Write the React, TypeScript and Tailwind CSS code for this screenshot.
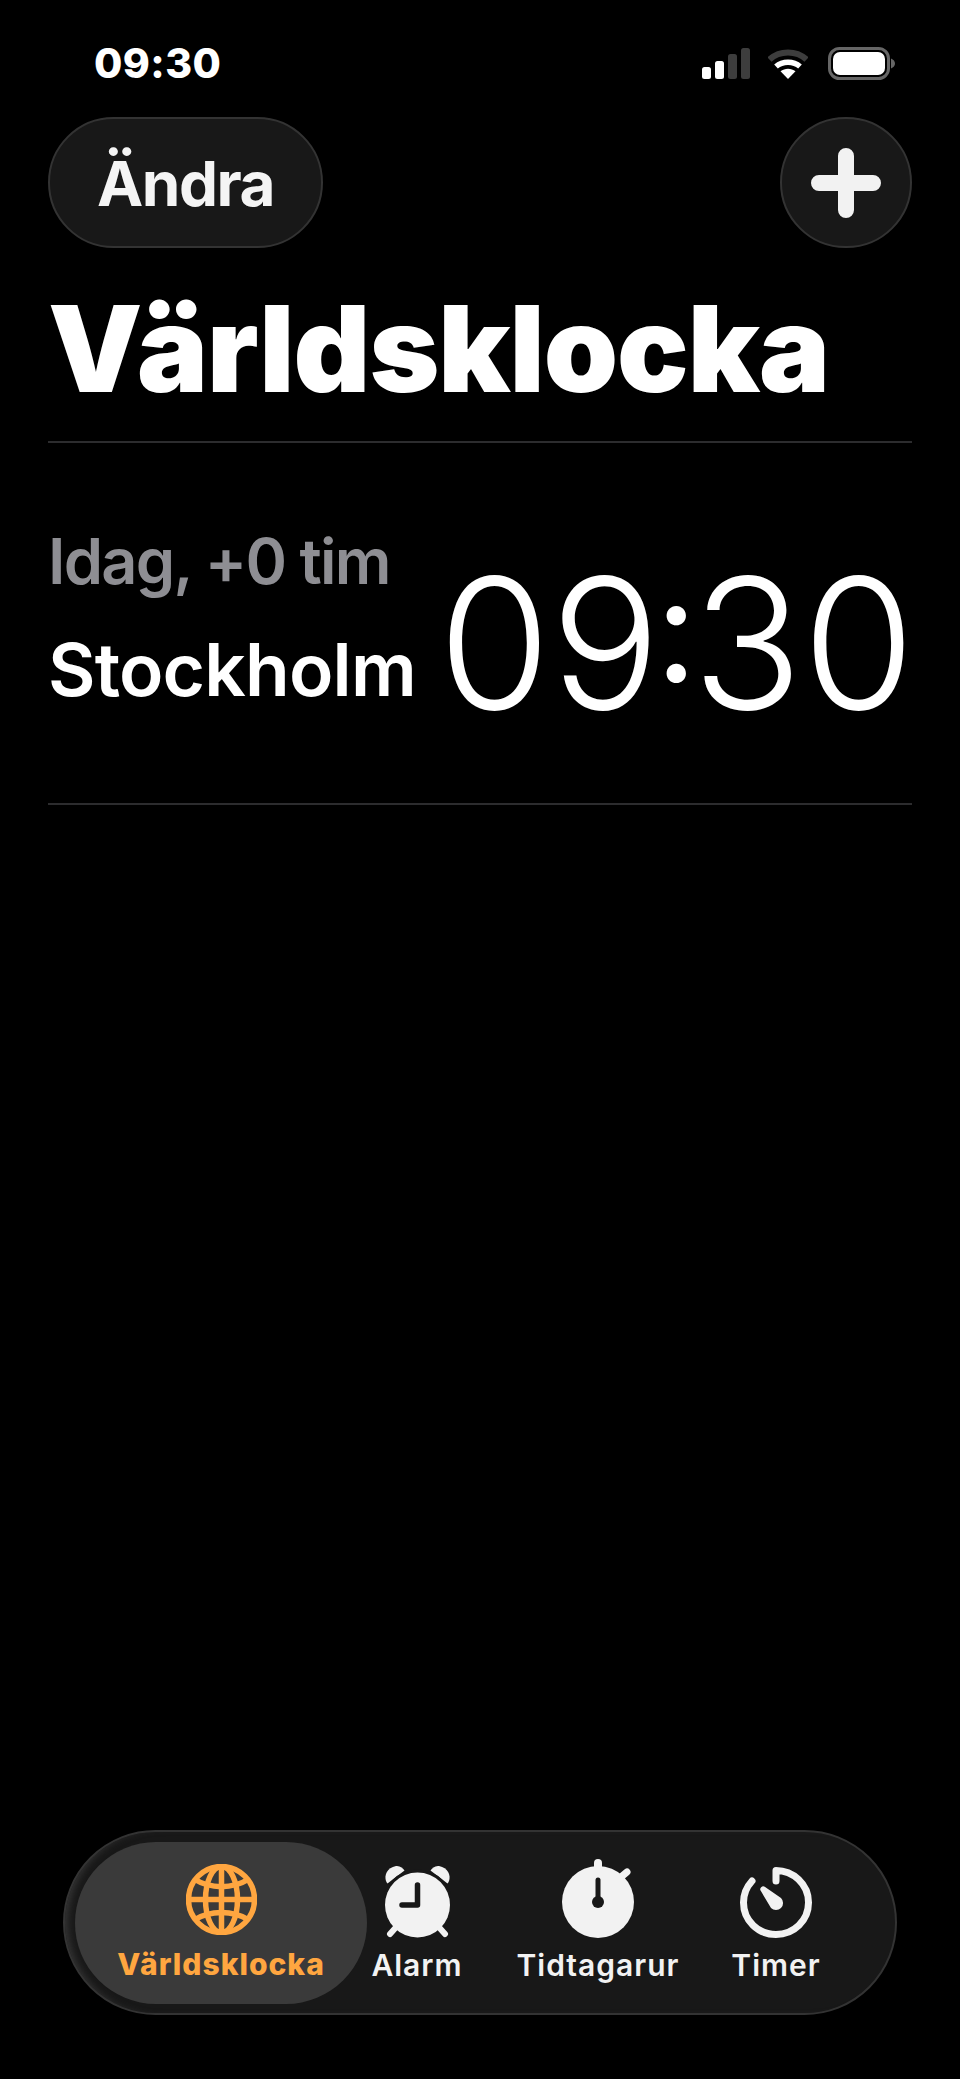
const inter = "font-['Inter','Liberation_Sans',sans-serif]";

function SignalIcon() {
  return (
    <svg width="48" height="31" viewBox="0 0 48 31" fill="none">
      <rect x="0" y="19" width="9" height="12" rx="2.5" fill="#fff" />
      <rect x="13" y="13" width="9" height="18" rx="2.5" fill="#fff" />
      <rect x="26" y="6" width="9" height="25" rx="2.5" fill="#3d3d3d" />
      <rect x="39" y="0" width="9" height="31" rx="2.5" fill="#3d3d3d" />
    </svg>
  );
}

function WifiIcon() {
  return (
    <svg width="40" height="31" viewBox="0 0 40 31" fill="none">
      <path d="M1.5 11.5C11.5 2 28.5 2 38.5 11.5" stroke="#3d3d3d" strokeWidth="6" />
      <path d="M8 18.5C14.5 12.8 25.5 12.8 32 18.5" stroke="#fff" strokeWidth="5.5" />
      <path d="M20 31L12.5 23.2C16.8 19.8 23.2 19.8 27.5 23.2L20 31Z" fill="#fff" />
    </svg>
  );
}

function BatteryIcon() {
  return (
    <svg width="67" height="33" viewBox="0 0 67 33" fill="none">
      <rect x="1.5" y="1.5" width="59" height="30" rx="10" stroke="#666" strokeWidth="3" />
      <rect x="5" y="5" width="52" height="23" rx="7" fill="#fff" />
      <path d="M63 11.5C65.5 12.5 67 14.3 67 16.5C67 18.7 65.5 20.5 63 21.5V11.5Z" fill="#666" />
    </svg>
  );
}

function GlobeIcon() {
  return (
    <svg width="71" height="71" viewBox="0 0 71 71" fill="none" stroke="#ffa640" strokeWidth="5.5">
      <circle cx="35.5" cy="35.5" r="33" />
      <ellipse cx="35.5" cy="35.5" rx="16" ry="33" />
      <path d="M35.5 2.5V68.5M2.5 35.5H68.5" />
      <path d="M9 15.5C24 25 47 25 62 15.5M9 55.5C24 46 47 46 62 55.5" />
    </svg>
  );
}

function AlarmIcon() {
  return (
    <svg width="67" height="73" viewBox="0 0 67 73" fill="none">
      {/* bells, cut off from the body by a dark ring */}
      <path d="M2 16C0 10 3 3 12 1C16 0.5 19 3 20.5 5.5L3.5 18.5C3 18 2.4 17 2 16Z" fill="#f2f2f2" />
      <path d="M65 16C67 10 64 3 55 1C51 0.5 48 3 46.5 5.5L63.5 18.5C64 18 64.6 17 65 16Z" fill="#f2f2f2" />
      <circle cx="33.5" cy="40" r="35.5" fill="#181818" />
      <path d="M14 60L6 69M53 60L61 69" stroke="#f2f2f2" strokeWidth="6" strokeLinecap="round" />
      <circle cx="33.5" cy="40" r="32.5" fill="#f2f2f2" />
      <path d="M33.5 20V40H18" stroke="#181818" strokeWidth="5.5" strokeLinecap="round" strokeLinejoin="round" />
    </svg>
  );
}

function StopwatchIcon() {
  return (
    <svg width="72" height="79" viewBox="0 0 72 79" fill="none">
      <path d="M36 4V12" stroke="#f2f2f2" strokeWidth="8" strokeLinecap="round" />
      <path d="M59 18L65 13" stroke="#f2f2f2" strokeWidth="7" strokeLinecap="round" />
      <circle cx="36" cy="43" r="36" fill="#f2f2f2" />
      <path d="M36 21V43" stroke="#181818" strokeWidth="5" strokeLinecap="round" />
      <circle cx="36" cy="43" r="6" fill="#181818" />
    </svg>
  );
}

function TimerIcon() {
  return (
    <svg width="72" height="71" viewBox="0 0 72 71" fill="none">
      <path d="M36 14V3.5C53 3.5 68.5 17 68.5 35.5C68.5 53.5 54 67.5 36 67.5C18 67.5 3.5 53.5 3.5 35.5C3.5 27 7 19.5 12 14" stroke="#f2f2f2" strokeWidth="7" strokeLinecap="round" strokeLinejoin="round" />
      <path d="M25.1 19.9L41 31A7 7 0 0 1 31 41L20.9 24.1A3 3 0 0 1 25.1 19.9Z" fill="#f2f2f2" />
    </svg>
  );
}

const tabs = [
  { label: "Alarm", icon: <AlarmIcon />, width: "w-[100px]" },
  { label: "Tidtagarur", icon: <StopwatchIcon />, width: "w-[262px]" },
  { label: "Timer", icon: <TimerIcon />, width: "w-[94px]" },
];

export default function App() {
  return (
    <div className={`${inter} flex h-[2079px] w-[960px] flex-col overflow-hidden bg-black text-white`}>
      {/* status bar */}
      <div className="flex h-[117px] items-start justify-between pl-[94px] pr-[65px] pt-[47px]">
        <span className="text-[41px] font-extrabold leading-[33px] tracking-[0.4px]">09:30</span>
        <div className="flex items-center">
          <SignalIcon />
          <div className="ml-[18px] mr-[20px]">
            <WifiIcon />
          </div>
          <BatteryIcon />
        </div>
      </div>

      {/* nav buttons */}
      <div className="flex items-center justify-between px-[48px]">
        <button className="flex h-[131px] w-[275px] items-center justify-center rounded-full border-2 border-[#333] bg-[#181818] pt-[2px] text-[62px] font-bold tracking-[-1.5px] text-[#f4f4f4]">
          Ändra
        </button>
        <button className="flex h-[131px] w-[132px] items-center justify-center rounded-full border-2 border-[#333] bg-[#181818]">
          <svg width="70" height="70" viewBox="0 0 70 70" fill="none">
            <path d="M35 8V62M8 35H62" stroke="#f2f2f2" strokeWidth="16" strokeLinecap="round" />
          </svg>
        </button>
      </div>

      <h1 className="mt-[41px] pl-[48px] text-[119px] font-black leading-[120px] tracking-[-1px]">Världsklocka</h1>

      {/* clock list */}
      <div className="mx-[48px] mt-[32px] h-[2px] bg-[#2c2c2e]" />
      <div className="mx-[48px] flex h-[360px] items-center justify-between">
        <div className="flex flex-col pb-[11px]">
          <span className="text-[63px] font-semibold leading-[72px] tracking-[-1.7px] text-[#8e8e93]">Idag, +0 tim</span>
          <span className="mt-[33px] text-[73px] font-semibold leading-[80px] tracking-[-0.8px]">Stockholm</span>
        </div>
        {/* colon set smaller and lifted so the dots sit mid-digit */}
        <span className="-mr-[3px] mt-[39px] whitespace-nowrap text-[182px] font-light leading-[180px]">
          0<span className="tracking-[-5px]">9</span>
          <span className="align-[27px] text-[146px] font-normal leading-none tracking-[-5px]">:</span>30
        </span>
      </div>
      <div className="mx-[48px] h-[2px] bg-[#2c2c2e]" />

      {/* tab bar */}
      <div className="mx-[63px] mb-[64px] mt-auto flex h-[185px] items-center rounded-full border-2 border-[#333] bg-[#181818] pl-[10px] shadow-[inset_8px_0_8px_-6px_#3a3a3a]">
        <div className="flex h-[162px] w-[292px] flex-col items-center rounded-full bg-[#3a3a3a] pt-[22px]">
          <GlobeIcon />
          <span className="mt-[11px] text-[30px] font-extrabold leading-[36px] tracking-[1px] text-[#ffa640]">Världsklocka</span>
        </div>
        {tabs.map((tab) => (
          <div key={tab.label} className={`${tab.width} flex h-[162px] flex-col items-center pt-[17px]`}>
            <div className="flex h-[79px] items-end">{tab.icon}</div>
            <span className="mt-[9px] text-[30px] font-semibold leading-[36px] tracking-[1px] text-[#f2f2f2]">{tab.label}</span>
          </div>
        ))}
      </div>
    </div>
  );
}
